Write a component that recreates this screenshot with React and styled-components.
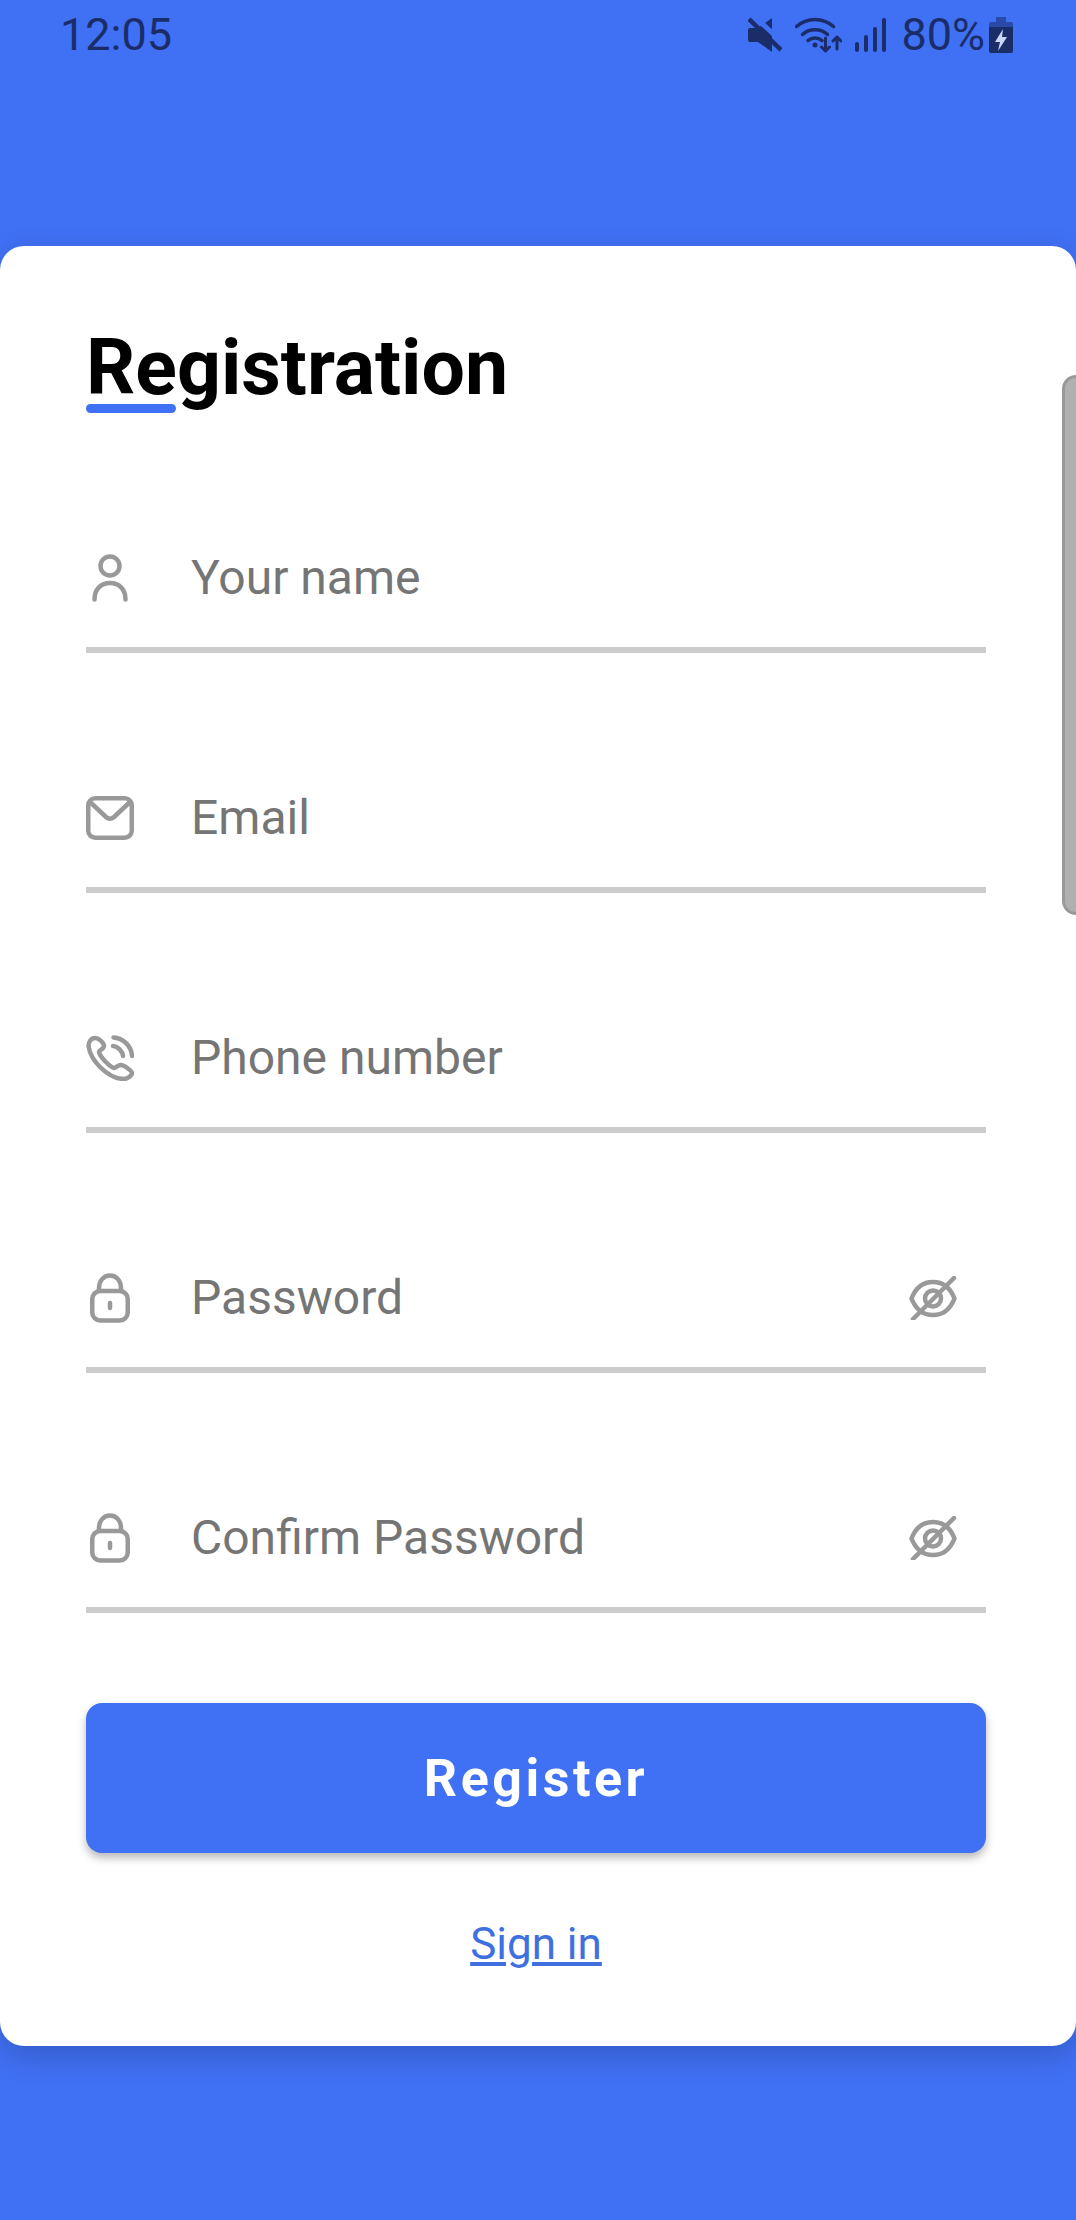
import React from "react"
import styled, { createGlobalStyle } from "styled-components"

const GlobalStyle = createGlobalStyle`
  html, body {
    margin: 0;
    padding: 0;
    background: #4070f4;
  }
  * {
    box-sizing: border-box;
  }
`

const Page = styled.div`
  position: relative;
  width: 1076px;
  height: 2220px;
  overflow: hidden;
  background-color: #4070f4;
  font-family: Roboto, sans-serif;
`

const StatusBar = styled.div`
  height: 246px;
  padding: 8px 63px 0 60px;
  display: flex;
  justify-content: space-between;
  align-items: flex-start;
  color: #1b2d69;
`

const Time = styled.span`
  font-size: 45px;
  line-height: 54px;
`

const StatusIcons = styled.div`
  display: flex;
  align-items: center;
  height: 54px;
  gap: 13px;
`

const Percent = styled.span`
  font-size: 45px;
  line-height: 54px;
  margin: 0 -9px 0 2px;
`

const Card = styled.div`
  height: 1800px;
  padding: 0 90px 0 86px;
  background-color: #fff;
  border-radius: 24px;
  box-shadow: 0 10px 30px rgba(0, 0, 0, 0.18);
`

const Heading = styled.div`
  position: relative;
  padding-top: 78px;
  height: 146px;
`

const Title = styled.h1`
  margin: 0;
  font-size: 77px;
  line-height: 88px;
  font-weight: 700;
  color: #000;
`

const TitleMark = styled.span`
  position: absolute;
  left: 0;
  top: 158px;
  width: 90px;
  height: 9px;
  border-radius: 5px;
  background-color: #4070f4;
`

const Form = styled.div`
  padding-top: 21px;
`

const Field = styled.div`
  height: 240px;
  display: flex;
  align-items: flex-end;
`

const FieldRow = styled.div`
  width: 100%;
  height: 138px;
  padding-bottom: 6px;
  display: flex;
  align-items: center;
  border-bottom: 6px solid #ccc;
`

const IconSlot = styled.div`
  width: 48px;
  margin-right: 57px;
  flex: none;
  display: flex;
  align-items: center;
  justify-content: center;
  color: #999;
`

const Placeholder = styled.span`
  flex: 1;
  font-size: 48px;
  line-height: 56px;
  color: #757575;
`

const Eye = styled.div`
  width: 48px;
  margin-right: 29px;
  display: flex;
  color: #999;
`

const Submit = styled.button`
  display: block;
  width: 100%;
  height: 150px;
  margin-top: 90px;
  border: none;
  border-radius: 16px;
  background-color: #4070f4;
  color: #fff;
  font-family: Roboto, sans-serif;
  font-size: 52px;
  font-weight: 700;
  letter-spacing: 3.5px;
  box-shadow: 0 5px 8px rgba(0, 0, 0, 0.28);
`

const SignIn = styled.a`
  display: block;
  margin-top: 64px;
  text-align: center;
  font-size: 44px;
  line-height: 54px;
  color: #4070e0;
  text-decoration: underline;
`

const Scrollbar = styled.div`
  position: absolute;
  right: 0;
  top: 375px;
  width: 14px;
  height: 540px;
  background-color: #b0b0b0;
  border: 3px solid #999;
  border-right: none;
  border-radius: 14px 0 0 14px;
`

const Stroke = ({ w, h, children }) => (
  <svg width={w} height={h} viewBox={`0 0 ${w} ${h}`} fill="none" stroke="currentColor" strokeWidth="4.5" strokeLinecap="round" strokeLinejoin="round">
    {children}
  </svg>
)

const UserIcon = () => (
  <Stroke w={36} h={48}>
    <circle cx="18" cy="12" r="9.5" />
    <path d="M2.500 45.500C2.500 35 9 29 18 29s15.500 6 15.500 16.500" />
  </Stroke>
)

const MailIcon = () => (
  <Stroke w={48} h={44}>
    <rect x="2.250" y="2.250" width="43.500" height="39.500" rx="7" />
    <path d="M4 6l16 15c2.500 2.200 5.500 2.200 8 0L44 6" />
  </Stroke>
)

const PhoneIcon = () => (
  <Stroke w={48} h={46}>
    <path d="M9 3C5 3 2.500 7 2.500 11C3.500 18 8 26 14 32C20 38 29 44 38 44C42 44 46 40 46 38C46 36 38 30 35 30C32 30 30 33 28 33C24 32 14 22 13 17C13 15 18 14 18 11C18 8 13 3 9 3Z" />
    <path d="M27.500 2.500C37 3 45.500 11 46 21" />
    <path d="M27 11C32 11.500 36.500 16 37 21" />
  </Stroke>
)

const LockIcon = () => (
  <Stroke w={40} h={50}>
    <rect x="2.250" y="18" width="35.500" height="29.500" rx="8" />
    <path d="M9 18v-3C9 8 13.500 2.500 20 2.500S31 8 31 15v3" />
    <path d="M20 30v5" />
  </Stroke>
)

const EyeOffIcon = () => (
  <Stroke w={48} h={44}>
    <path d="M2.500 22.500C7 11 15 6 24 6S41 11 45.500 22.500C41 34 33 39 24 39S7 34 2.500 22.500Z" />
    <circle cx="24" cy="22.500" r="8" />
    <path d="M4 43L45 2" />
  </Stroke>
)

const MuteIcon = () => (
  <svg width="34" height="36" viewBox="0 0 34 36" fill="currentColor">
    <path d="M2 11h8L24 1v34L10 25H2a2 2 0 0 1-2-2V13a2 2 0 0 1 2-2z" />
    <path d="M5 -2L37 28" stroke="#4070f4" strokeWidth="5" />
    <path d="M1 2L33 33" stroke="currentColor" strokeWidth="4.500" />
  </svg>
)

const WifiIcon = () => (
  <svg width="47" height="36" viewBox="0 0 47 36" fill="none" stroke="currentColor" strokeWidth="3.500" strokeLinecap="round" strokeLinejoin="round">
    <path d="M1.500 9.500C12 0 28 0 38.500 9.500" />
    <path d="M7.500 17.500C14 11 26 11 32.500 17.500" />
    <path d="M13 23.500C17 20 23 20 27 23.500" />
    <circle cx="20" cy="28" r="2.500" fill="currentColor" stroke="none" />
    <path d="M30.500 21v13M26.500 30l4 4 4-4" strokeWidth="3" />
    <path d="M42 32V20M38 24l4-4 4 4" strokeWidth="3" />
  </svg>
)

const SignalIcon = () => (
  <svg width="31" height="34" viewBox="0 0 31 34" fill="currentColor">
    <rect x="0" y="24" width="4" height="10" rx="2" />
    <rect x="9" y="17" width="4" height="17" rx="2" />
    <rect x="18" y="9" width="4" height="25" rx="2" />
    <rect x="27" y="0" width="4" height="34" rx="2" />
  </svg>
)

const BatteryIcon = () => (
  <svg width="24" height="36" viewBox="0 0 24 36">
    <path d="M7 0h10v5h5a2 2 0 0 1 2 2v3H0V7a2 2 0 0 1 2-2h5z" fill="#2a4aa8" />
    <path d="M0 10h24v24a2 2 0 0 1-2 2H2a2 2 0 0 1-2-2z" fill="#1b2d69" />
    <path d="M14 12L6 25h5l-2 9 9-14h-5z" fill="#c9d6fb" />
  </svg>
)

const fields = [
  { label: "Your name", icon: <UserIcon /> },
  { label: "Email", icon: <MailIcon /> },
  { label: "Phone number", icon: <PhoneIcon /> },
  { label: "Password", icon: <LockIcon />, secret: true },
  { label: "Confirm Password", icon: <LockIcon />, secret: true },
]

const App = () => {
  return (
    <Page>
      <GlobalStyle />
      <StatusBar>
        <Time>12:05</Time>
        <StatusIcons>
          <MuteIcon />
          <WifiIcon />
          <SignalIcon />
          <Percent>80%</Percent>
          <BatteryIcon />
        </StatusIcons>
      </StatusBar>
      <Card>
        <Heading>
          <Title>Registration</Title>
          <TitleMark />
        </Heading>
        <Form>
          {fields.map(field => (
            <Field key={field.label}>
              <FieldRow>
                <IconSlot>{field.icon}</IconSlot>
                <Placeholder>{field.label}</Placeholder>
                {field.secret && <Eye><EyeOffIcon /></Eye>}
              </FieldRow>
            </Field>
          ))}
        </Form>
        <Submit>Register</Submit>
        <SignIn>Sign in</SignIn>
      </Card>
      <Scrollbar />
    </Page>
  )
}

export default App
